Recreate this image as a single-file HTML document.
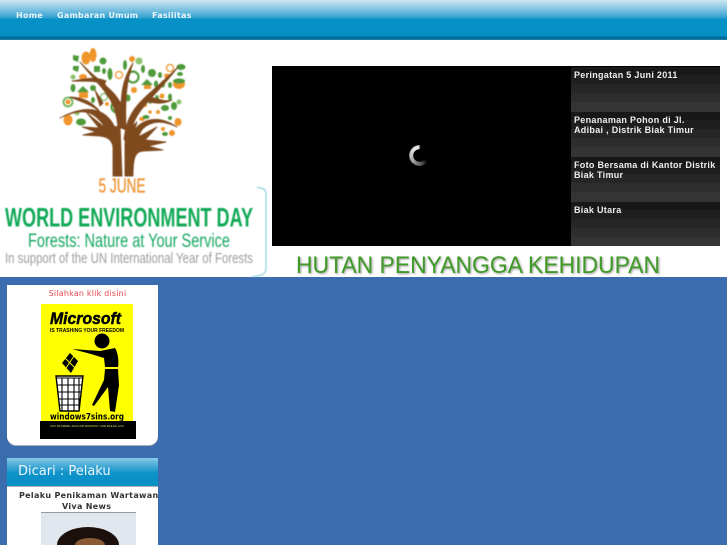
<!DOCTYPE html>
<html>
<head>
<meta charset="utf-8">
<title>Hutan Penyangga Kehidupan</title>
<style>
html,body{margin:0;padding:0;width:727px;height:545px;overflow:hidden;background:#3b6cae;}
body{position:relative;font-family:"DejaVu Sans",sans-serif;}
.abs{position:absolute;}
#head{left:0;top:40px;width:727px;height:237px;background:#fff;}
#nav{left:0;top:0;width:727px;height:40px;background:linear-gradient(#cbe5f1 0,#8cc9e4 8px,#2f9fd0 18px,#0590c6 19px,#0590c6 36px,#006a99 37px,#006a99 39px,#3f8fb4 40px);}
#nav a{position:absolute;top:10px;font:bold 8px/12px "DejaVu Sans",sans-serif;letter-spacing:.25px;color:#eaf6fb;text-decoration:none;white-space:nowrap;}
#player{left:272px;top:66px;width:448px;height:180px;background:#000;}
.row{position:absolute;left:299px;width:149px;height:45px;background:linear-gradient(#181818 0,#181818 8px,#1f1f1f 8px,#1f1f1f 17px,#262626 17px,#262626 26px,#2d2d2d 26px,#2d2d2d 35px,#343434 35px,#343434 45px);}
.row div{position:absolute;left:3px;top:3px;width:146px;font:bold 9px/10px "Liberation Sans",sans-serif;letter-spacing:.3px;color:#eee;}
#spin{left:409px;top:145px;width:21px;height:21px;border-radius:50%;background:conic-gradient(from 125deg,transparent 0,#555 40deg,#aaa 110deg,#e4e4e4 190deg,#eee 235deg,transparent 237deg,transparent 360deg);-webkit-mask:radial-gradient(circle,transparent 6px,#000 6.6px);mask:radial-gradient(circle,transparent 6px,#000 6.6px);filter:blur(.5px);}
#card1{left:7px;top:285px;width:151px;height:160px;background:#fff;border-radius:0 0 9px 9px;box-shadow:0 1px 0 #a4adb8;}
#silah{left:0;top:3px;width:161px;text-align:center;font:8px/12px "DejaVu Sans",sans-serif;letter-spacing:.2px;color:#e8474f;position:absolute;}
#card2{left:7px;top:458px;width:151px;height:87px;background:#fff;overflow:hidden;}
#c2h{left:0;top:0;width:151px;height:28px;background:linear-gradient(#86cbe7 0,#45aad6 8px,#0f92c9 15px,#0590c6 28px);border-bottom:1px solid #b5b5b5;}
#c2h span{position:absolute;left:11px;top:5px;font:13px/17px "DejaVu Sans",sans-serif;color:#eef8fc;white-space:nowrap;}
.pel{position:absolute;font:bold 8px/11px "DejaVu Sans",sans-serif;letter-spacing:.32px;color:#333;white-space:nowrap;}
#photo{left:34px;top:54px;width:95px;height:32px;background:#e0e7ee;border-top:1px solid #9a9a9a;overflow:hidden;}
#photo i{position:absolute;display:block;}
svg{position:absolute;left:0;top:0;}
</style>
</head>
<body>
<div class="abs" id="head"></div>
<div class="abs" id="nav">
  <a href="#" style="left:16px">Home</a>
  <a href="#" style="left:57px">Gambaran Umum</a>
  <a href="#" style="left:152px">Fasilitas</a>
</div>

<svg width="727" height="280" viewBox="0 0 727 280" style="filter:blur(.45px)">
  <!-- foliage -->
  <g fill="#f0952c">
    <ellipse cx="86" cy="58" rx="4.500" ry="6.500"/><ellipse cx="93" cy="55" rx="3.500" ry="7"/>
    <ellipse cx="83" cy="77" rx="4" ry="3"/><circle cx="132" cy="59" r="3"/>
    <circle cx="119" cy="75" r="3.500" fill="none" stroke="#f0952c" stroke-width="1.300"/>
    <circle cx="170" cy="68" r="3.500" fill="none" stroke="#f0952c" stroke-width="1.300"/>
    <ellipse cx="167" cy="76" rx="3" ry="2.500"/><circle cx="134" cy="90" r="3"/>
    <rect x="79" y="92" width="9" height="6"/><circle cx="104" cy="86" r="2.500"/>
    <rect x="144" y="84" width="7" height="5"/><circle cx="162" cy="96" r="2.500"/>
    <circle cx="107" cy="104" r="2"/><circle cx="145" cy="105" r="2"/>
    <ellipse cx="68" cy="120" rx="4.500" ry="5.500"/><ellipse cx="106" cy="122" rx="3.500" ry="2"/>
    <ellipse cx="142" cy="119" rx="3" ry="2"/><circle cx="158" cy="112" r="2"/>
    <ellipse cx="178" cy="122" rx="3.500" ry="4"/><circle cx="172" cy="133" r="3"/>
    <circle cx="121" cy="119" r="2"/><circle cx="150" cy="112" r="1.800"/><circle cx="163" cy="129" r="2"/>
    <ellipse cx="179" cy="84" rx="6" ry="5"/><circle cx="68" cy="102" r="2.500"/>
  </g>
  <g fill="#4f9a3a">
    <path d="M73 55l6 1-1 6-5-2zM73 66l6 0-1 6-5-2z"/><circle cx="103" cy="61" r="3.500"/>
    <rect x="94" y="66" width="6" height="6"/><ellipse cx="104" cy="71" rx="2" ry="3"/>
    <ellipse cx="110" cy="74" rx="2.500" ry="6"/><ellipse cx="125" cy="65" rx="2" ry="5"/>
    <circle cx="139" cy="61" r="3.500" fill="#8cc46c"/><ellipse cx="143" cy="69" rx="2" ry="4"/>
    <circle cx="152" cy="73" r="4"/><ellipse cx="160" cy="75" rx="2" ry="3"/>
    <ellipse cx="181" cy="67" rx="4.500" ry="3"/><ellipse cx="180" cy="74" rx="3" ry="2"/>
    <circle cx="73" cy="77" r="2.500" fill="#8cc46c"/><ellipse cx="73" cy="88" rx="2.500" ry="4"/>
    <circle cx="93" cy="88" r="3"/>
    <circle cx="68" cy="102" r="4.500" fill="none" stroke="#6db355" stroke-width="1.800"/>
    <circle cx="77" cy="113" r="2.500" fill="#8cc46c"/><ellipse cx="81" cy="122" rx="5" ry="3.500"/>
    <circle cx="104" cy="97" r="3.500" fill="none" stroke="#7eb865" stroke-width="1.300"/>
    <ellipse cx="112" cy="96" rx="2.500" ry="4"/>
    <circle cx="133" cy="77" r="5.500" fill="none" stroke="#4f9a3a" stroke-width="2.200"/>
    <circle cx="117" cy="107" r="5.500" fill="none" stroke="#4f9a3a" stroke-width="2.200"/>
    <ellipse cx="123" cy="116" rx="2" ry="4"/><ellipse cx="128" cy="98" rx="2.500" ry="3.500"/>
    <ellipse cx="150" cy="100" rx="2" ry="4"/><ellipse cx="157" cy="99" rx="2" ry="4"/>
    <ellipse cx="156" cy="84" rx="2" ry="3.500"/><ellipse cx="163" cy="84" rx="2" ry="3.500"/>
    <ellipse cx="170" cy="85" rx="2" ry="3"/>
    <ellipse cx="170" cy="97" rx="2" ry="3.500"/><ellipse cx="174" cy="106" rx="3" ry="4"/>
    <circle cx="179" cy="102" r="2.500" fill="#8cc46c"/><ellipse cx="165" cy="108" rx="4" ry="3"/>
    <ellipse cx="146" cy="117" rx="3.500" ry="2"/><ellipse cx="132" cy="126" rx="2" ry="3"/>
    <ellipse cx="165" cy="134" rx="3" ry="2"/>
    <ellipse cx="93" cy="100" rx="2" ry="3"/><ellipse cx="100" cy="117" rx="2" ry="3"/>
    <circle cx="170" cy="118" r="2"/>
    <ellipse cx="179" cy="81" rx="6" ry="2.500"/>
    <path d="M77 92l6-6 6 6zM141 85l6-6 6 6z"/>
  </g>
  <g fill="#7f4a1e" stroke="#7f4a1e" stroke-width=".9" stroke-linejoin="round">
    <path d="M113 176V147C112 140 108 137 100 136L83 135L96 132L82 127L99 128L87 113L104 127L97 108L110 126L114 127L120 126L122 176Z"/>
    <path d="M125 176V145C125 135 128 130 137 122L133 134L146 122L138 137L157 127L145 140L166 142L148 146L163 150L143 151C136 152 133 155 133 176Z"/>
    <path d="M118 128C116 96 100 88 80 62C100 84 118 90 124 112L122 128Z"/>
    <path d="M104 85C92 79 85 82 72 81C85 79 95 76 106 81Z"/>
    <path d="M121 128C120 95 122 80 133 63C126 82 125 100 126 130Z"/>
    <path d="M124 140C127 105 145 100 178 67C153 100 135 108 130 135Z"/>
    <path d="M150 97C158 99 165 102 172 100C165 104 155 104 146 101Z"/>
    <path d="M116 130C108 110 90 102 60 118C85 106 95 112 107 130Z"/>
    <path d="M70 97C85 98 92 102 100 112C92 105 82 102 70 97Z"/>
    <path d="M128 143C135 120 155 112 177 127C155 116 142 125 134 141Z"/>
    <path d="M100 106L95 90L103 103Z"/>
  </g>

  <text x="98.500" y="192.500" font-family="Liberation Sans" font-size="20" fill="#ee9230" stroke="#ee9230" stroke-width=".3" textLength="47" lengthAdjust="spacingAndGlyphs">5 JUNE</text>
  <text x="5" y="226.500" font-family="Liberation Sans" font-weight="bold" font-size="27" fill="#10a956" textLength="248" lengthAdjust="spacingAndGlyphs">WORLD ENVIRONMENT DAY</text>
  <text x="28" y="247" font-family="Liberation Sans" font-size="19.500" fill="#16a862" textLength="202" lengthAdjust="spacingAndGlyphs">Forests: Nature at Your Service</text>
  <text x="5" y="263" font-family="Liberation Sans" font-size="15" fill="#9c9c9c" textLength="248" lengthAdjust="spacingAndGlyphs">In support of the UN International Year of Forests</text>
  <path d="M257 187.500C263 188 266 189 266 194V268C266 274 262 276 252 276.500" fill="none" stroke="#93d2e2" stroke-width="1.200"/>
</svg>

<div class="abs" id="player">
  <div class="row" style="top:1px"><div>Peringatan 5 Juni 2011</div></div>
  <div class="row" style="top:46px"><div>Penanaman Pohon di Jl.<br>Adibai , Distrik Biak Timur</div></div>
  <div class="row" style="top:91px"><div>Foto Bersama di Kantor Distrik<br>Biak Timur</div></div>
  <div class="row" style="top:136px;height:44px"><div>Biak Utara</div></div>
</div>
<div class="abs" id="spin"></div>

<svg width="727" height="280" viewBox="0 0 727 280">
  <text x="296" y="273" font-family="Liberation Sans" font-size="24.500" fill="#3f9a27" textLength="364" lengthAdjust="spacingAndGlyphs" style="filter:drop-shadow(1.500px 1.500px 1px rgba(70,70,70,.55))">HUTAN PENYANGGA KEHIDUPAN</text>
</svg>

<div class="abs" id="card1"><div id="silah">Silahkan klik disini</div></div>
<svg width="727" height="545" viewBox="0 0 727 545" style="filter:blur(.35px)">
  <rect x="41" y="304" width="92" height="118" fill="#ffff00"/>
  <rect x="40" y="421" width="96" height="18" fill="#000"/>
  <text x="50" y="324" font-family="Liberation Sans" font-weight="bold" font-style="italic" font-size="17" fill="#000" stroke="#000" stroke-width=".5" textLength="71" lengthAdjust="spacingAndGlyphs">Microsoft</text>
  <text x="50" y="332" font-family="Liberation Sans" font-weight="bold" font-size="5.500" fill="#000" textLength="74" lengthAdjust="spacingAndGlyphs">IS TRASHING YOUR FREEDOM</text>
  <circle cx="102" cy="341" r="7.500" fill="#000"/>
  <path d="M72 349L100 351L115 348C118 352 119 362 118 367L105 367L104 358L91 354Z" fill="#000"/>
  <path d="M105 369H118L119 385L115 412L110 411L108 387L94 406L92 405L104 380Z" fill="#000"/>
  <path d="M70 353L78 361L71 373L62 363Z" fill="#000"/>
  <path d="M65 358L75 368M74 356L66 368" stroke="#ffff00" stroke-width=".9" fill="none"/>
  <path d="M56 376H83L79 411H60Z" fill="#fff" stroke="#000" stroke-width="1.400"/>
  <path d="M56 378H83M57 385H82M58 392H81M59 399H80M60 405H80M62 378V411M68 378V411M74 378V411M79 378V411" stroke="#000" stroke-width="1.100" fill="none"/>
  <text x="50" y="419.500" font-family="DejaVu Sans" font-weight="bold" font-size="8.500" fill="#000" textLength="74" lengthAdjust="spacingAndGlyphs">windows7sins.org</text>
  <text x="50" y="427" font-family="Liberation Sans" font-size="2.600" fill="#dddd66" textLength="74" lengthAdjust="spacingAndGlyphs">STAY INFORMED: SIGN OUR WINDOWS 7 SINS MAILING LIST!</text>
</svg>

<div class="abs" id="card2">
  <div class="abs" id="c2h"><span>Dicari : Pelaku</span></div>
  <div class="pel" style="left:12px;top:32px">Pelaku Penikaman Wartawan</div>
  <div class="pel" style="left:55px;top:43px">Viva News</div>
  <div class="abs" id="photo">
    <i style="left:16px;top:14px;width:62px;height:18px;border-radius:50% 50% 0 0 / 100% 100% 0 0;background:#1c100c"></i>
    <i style="left:34px;top:25px;width:30px;height:7px;border-radius:50% 50% 0 0 / 100% 100% 0 0;background:#8a5a35"></i>
  </div>
</div>
</body>
</html>
